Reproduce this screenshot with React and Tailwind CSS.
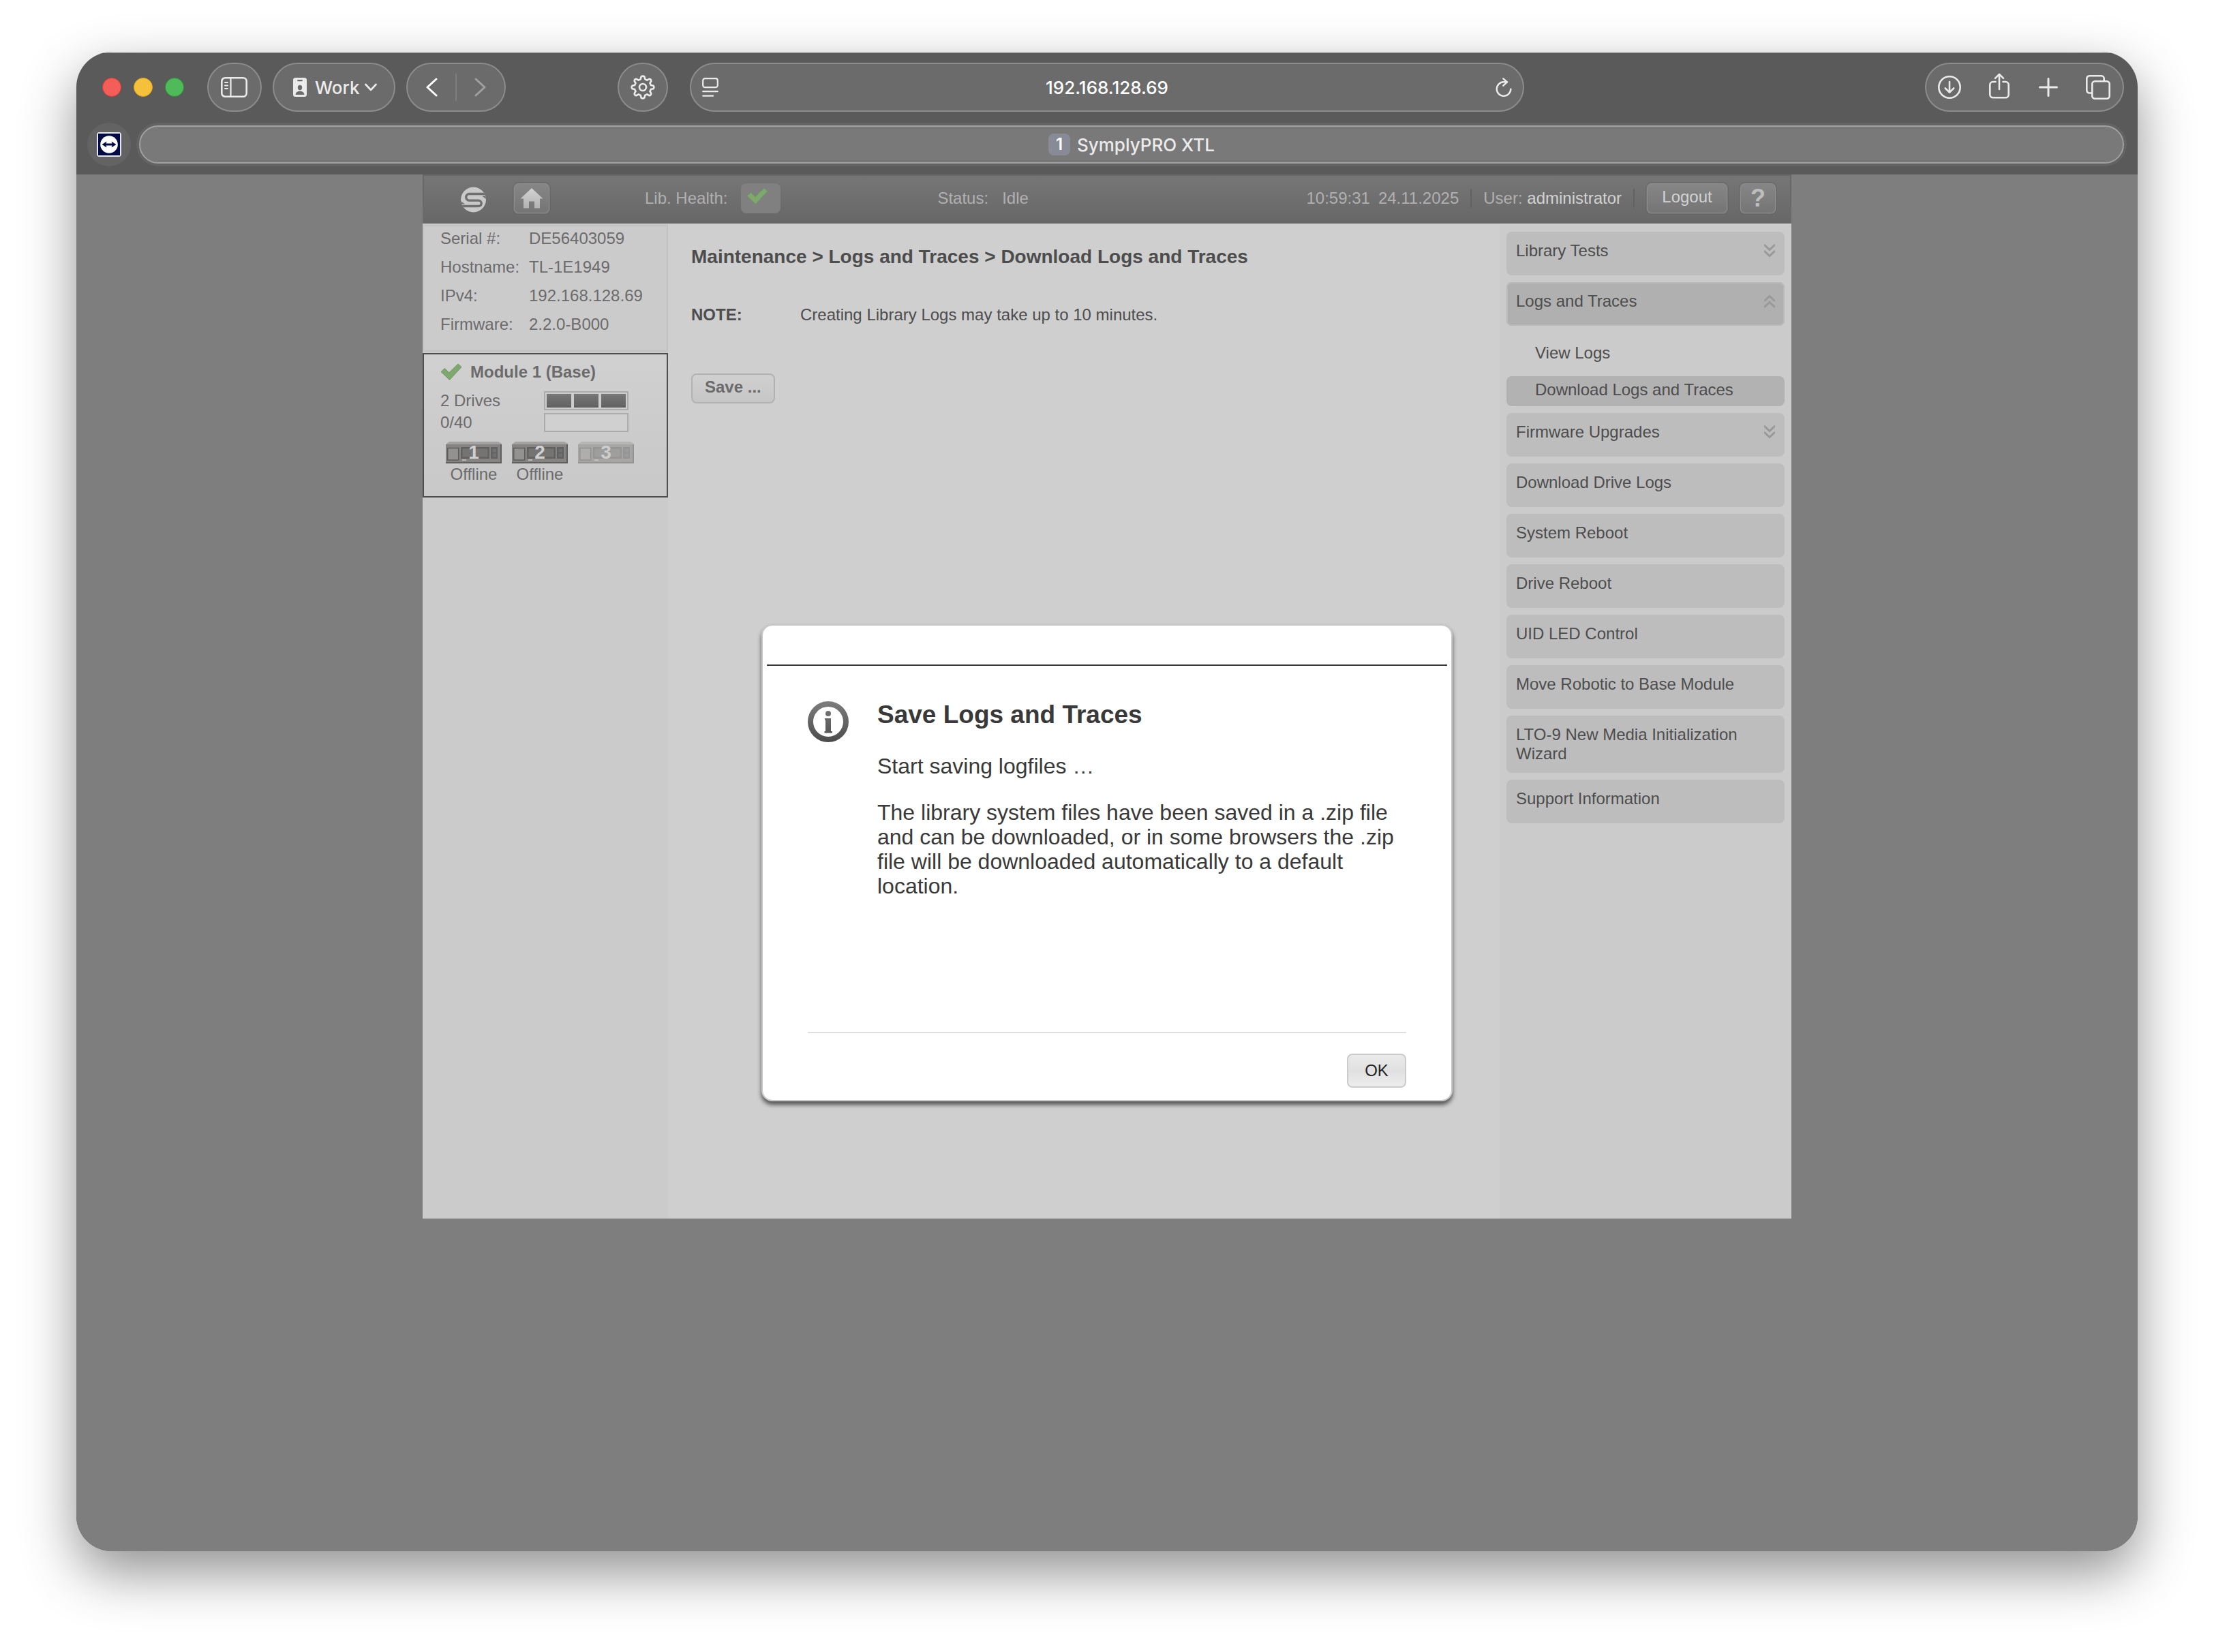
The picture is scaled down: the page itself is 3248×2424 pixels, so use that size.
import React, { useState } from 'react';

const libraryInfo = [
    { label: 'Serial #:', value: 'DE56403059' },
    { label: 'Hostname:', value: 'TL-1E1949' },
    { label: 'IPv4:', value: '192.168.128.69' },
    { label: 'Firmware:', value: '2.2.0-B000' },
];

const drives = [
    { id: 1, status: 'Offline' },
    { id: 2, status: 'Offline' },
    { id: 3, status: null },
];

const menu = [
    { label: 'Library Tests', expandable: true },
    {
        label: 'Logs and Traces',
        expandable: true,
        open: true,
        children: [
            { label: 'View Logs' },
            { label: 'Download Logs and Traces', active: true },
        ],
    },
    { label: 'Firmware Upgrades', expandable: true },
    { label: 'Download Drive Logs' },
    { label: 'System Reboot' },
    { label: 'Drive Reboot' },
    { label: 'UID LED Control' },
    { label: 'Move Robotic to Base Module' },
    { label: 'LTO-9 New Media Initialization Wizard' },
    { label: 'Support Information' },
];

/* ---------- browser icons ---------- */

function SidebarIcon() {
    return (
        <svg width="40" height="32" viewBox="0 0 40 32" fill="none" stroke="currentColor" strokeWidth="2.6" strokeLinecap="round">
            <rect x="1.3" y="2.3" width="36.4" height="27.4" rx="5" />
            <path d="M14.5 2.5v27" strokeWidth="2.2" />
            <path d="M6 9h4M6 13.500h4M6 18h4" strokeWidth="2" />
        </svg>
    );
}

function BadgeIcon() {
    return (
        <svg width="20" height="28" viewBox="0 0 20 28">
            <rect width="20" height="28" rx="3.500" fill="currentColor" />
            <rect x="6" y="3" width="8" height="2.200" rx="1.100" fill="#6b6b6b" />
            <ellipse cx="10" cy="14.500" rx="3.200" ry="3.700" fill="#6b6b6b" />
            <path d="M3.500 25c.4-3.600 3-5.300 6.500-5.300s6.100 1.700 6.500 5.300z" fill="#6b6b6b" />
        </svg>
    );
}

function Chevron({ d, width, height, stroke = 3 }) {
    return (
        <svg
            width={width}
            height={height}
            viewBox={`0 0 ${width} ${height}`}
            fill="none"
            stroke="currentColor"
            strokeWidth={stroke}
            strokeLinecap="round"
            strokeLinejoin="round"
        >
            <path d={d} />
        </svg>
    );
}

function GearIcon() {
    return (
        <svg width="36" height="36" viewBox="0 0 36 36" fill="none" stroke="currentColor" strokeWidth="2.6" strokeLinejoin="round">
            <path d="M15.600 2.500Q18 .7 20.400 2.500L21.300 6.200Q23 6.800 24.300 7.700L27.500 5.800Q30.400 6.200 30.300 9L28.500 12Q29.400 13.400 29.800 15L33.500 15.800Q35.200 18 33.500 20.200L29.800 21Q29.400 22.700 28.500 24L30.300 27.200Q30.200 30 27.300 30.200L24.300 28.300Q22.900 29.300 21.300 29.700L20.400 33.400Q18 35.200 15.600 33.400L14.700 29.700Q13.100 29.300 11.700 28.300L8.700 30.200Q5.800 30 5.700 27.200L7.500 24Q6.600 22.700 6.200 21L2.500 20.200Q.8 18 2.500 15.800L6.200 15Q6.600 13.400 7.500 12L5.700 9Q5.600 6.200 8.500 5.800L11.700 7.700Q13 6.800 14.700 6.200Z" />
            <circle cx="18" cy="18" r="5" />
        </svg>
    );
}

function ReaderIcon() {
    return (
        <svg width="24" height="28" viewBox="0 0 24 28" fill="none" stroke="currentColor" strokeWidth="2.200" strokeLinecap="round">
            <rect x="1.200" y="1.200" width="21.600" height="13" rx="3" />
            <path d="M1.200 20.200h21.600M1.200 26.600h15" />
        </svg>
    );
}

function ReloadIcon() {
    return (
        <svg width="24" height="28" viewBox="0 0 24 28" fill="none" stroke="currentColor" strokeWidth="2.400" strokeLinecap="round" strokeLinejoin="round">
            <path d="M22.300 16.600A10.300 10.300 0 1 1 12 6.300h5" />
            <path d="M11.300 1.300l5.700 5-5.700 5.400" />
        </svg>
    );
}

function DownloadIcon() {
    return (
        <svg width="36" height="36" viewBox="0 0 36 36" fill="none" stroke="currentColor" strokeWidth="2.600" strokeLinecap="round" strokeLinejoin="round">
            <circle cx="18" cy="18" r="15.700" />
            <path d="M18 10v15.500M11.800 19.500l6.200 6.200 6.200-6.200" />
        </svg>
    );
}

function ShareIcon() {
    return (
        <svg width="32" height="38" viewBox="0 0 32 38" fill="none" stroke="currentColor" strokeWidth="2.600" strokeLinecap="round" strokeLinejoin="round">
            <path d="M10.500 13H6.800a4.500 4.500 0 0 0-4.500 4.500v14.300a4.500 4.500 0 0 0 4.500 4.500h18.400a4.500 4.500 0 0 0 4.500-4.500V17.500a4.500 4.500 0 0 0-4.500-4.500h-3.700" />
            <path d="M16 24V2M10 7.800L16 1.800l6 6" />
        </svg>
    );
}

function PlusIcon() {
    return (
        <svg width="28" height="28" viewBox="0 0 28 28" stroke="currentColor" strokeWidth="3" strokeLinecap="round">
            <path d="M14 1.500v25M1.500 14h25" />
        </svg>
    );
}

function TabsIcon() {
    return (
        <svg width="36" height="36" viewBox="0 0 36 36" fill="none" stroke="currentColor" strokeWidth="2.600" strokeLinejoin="round">
            <rect x="9.300" y="9.300" width="25.400" height="25.400" rx="4" />
            <path d="M9 26.500H5.300a4 4 0 0 1-4-4V5.300a4 4 0 0 1 4-4h17.400a4 4 0 0 1 4 4v3.700" />
        </svg>
    );
}

function RemoteIcon() {
    return (
        <svg width="36" height="36" viewBox="0 0 36 36">
            <rect width="36" height="36" rx="4" fill="#e6e6ea" />
            <rect x="2" y="2" width="32" height="32" fill="#020b45" />
            <circle cx="18" cy="18" r="12.800" fill="#fff" />
            <path d="M7.500 18l7-4.500-.8 3.100h8.600l-.8-3.100 7 4.500-7 4.500.8-3.100h-8.600l.8 3.100z" fill="#020b45" />
        </svg>
    );
}

/* ---------- library icons ---------- */

function SymplyLogo() {
    return (
        <svg width="37" height="38" viewBox="0 0 37 38">
            <defs>
                <clipPath id="disc">
                    <circle cx="18.500" cy="19" r="18.500" />
                </clipPath>
            </defs>
            <g clipPath="url(#disc)" fill="none">
                <rect width="37" height="38" fill="#c9c9c9" />
                <path d="M38 10.500H12.500a4.800 4.800 0 0 0 0 9.600H26a4 4 0 0 1 0 8.400H-1" stroke="#6f6f6f" strokeWidth="3.400" />
                <path d="M31 13.500h8v6z" fill="#6f6f6f" />
                <path d="M6 25.500h-8v-6z" fill="#6f6f6f" />
            </g>
        </svg>
    );
}

function HomeIcon() {
    return (
        <svg width="34" height="30" viewBox="0 0 34 30">
            <defs>
                <linearGradient id="home" x1="0" y1="0" x2="0" y2="1">
                    <stop offset="0" stopColor="#d2d2d2" />
                    <stop offset="1" stopColor="#b2b2b2" />
                </linearGradient>
            </defs>
            <path d="M17 0L33.500 15.500H29V29.500H21V19.500H13V29.500H5V15.500H.5z" fill="url(#home)" />
        </svg>
    );
}

function CheckIcon() {
    return (
        <svg width="32" height="26" viewBox="0 0 32 26">
            <path d="M1 12.500L6.500 7.500L12.800 13.800L26 1L31 5.500L13.500 24.500z" fill="#7fa86c" stroke="#6f9468" strokeWidth="1" strokeLinejoin="round" />
        </svg>
    );
}

function DoubleChevron({ up }) {
    return (
        <svg width="16" height="20" viewBox="0 0 16 20" fill="none" stroke="#999" strokeWidth="3">
            {up ? <path d="M0 10l8-7.500 8 7.500M0 19l8-7.500 8 7.500" /> : <path d="M0 1l8 7.500 8-7.500M0 10l8 7.500 8-7.500" />}
        </svg>
    );
}

function DriveIcon({ number, empty }) {
    return (
        <div className={`relative w-[82px] h-8 ${empty ? 'opacity-50' : ''}`}>
            <svg width="82" height="33" viewBox="0 0 82 33">
                <path d="M0 4L5 0H77L82 3V32H0z" fill="#a3a3a3" />
                <path d="M0 4H82V31H0z" fill="#858482" />
                <path d="M80 4h2v28H0v-2h80z" fill="#5e5e5e" />
                <rect x="2.700" y="9.500" width="16" height="17.500" fill="#939290" stroke="#5c5c5c" strokeWidth="1.500" />
                <rect x="22" y="8" width="42" height="17" fill="#616161" />
                <rect x="24.500" y="10.500" width="37" height="12" fill="#757472" />
                <rect x="66" y="8" width="10" height="17" fill="#616161" />
                <path d="M68.500 10.500h5.500v5h-5.500zM68.500 17.500h5.500v5h-5.500z" fill="#707070" />
                <rect x="24" y="26" width="6" height="2" fill="#b8b8b8" />
            </svg>
            <span className="absolute inset-0 text-center text-[28px] leading-8 font-bold text-[#d0d0d0]">{number}</span>
        </div>
    );
}

function InfoIcon() {
    return (
        <svg width="60" height="60" viewBox="0 0 60 60">
            <defs>
                <linearGradient id="info" x1="0" y1="0" x2="0" y2="60" gradientUnits="userSpaceOnUse">
                    <stop offset="0" stopColor="#7d7d7d" />
                    <stop offset="1" stopColor="#4c4c4c" />
                </linearGradient>
            </defs>
            <circle cx="30" cy="30" r="26" fill="none" stroke="url(#info)" strokeWidth="8" />
            <circle cx="30" cy="18" r="4" fill="url(#info)" />
            <path d="M25 25h9v19h2v2.500H24.500V44H26V27.500h-1z" fill="url(#info)" />
        </svg>
    );
}

/* ---------- browser chrome ---------- */

function BrowserToolbar() {
    return (
        <div className="flex items-center py-4 px-5 gap-8">
            <div className="flex flex-1 items-center justify-between">
                <div className="flex items-center gap-4">
                    <div className="flex gap-[18px] px-[18px]">
                        <button aria-label="Close" className="size-7 rounded-full bg-[#f35f58] border border-[#dd3f3a]" />
                        <button aria-label="Minimize" className="size-7 rounded-full bg-[#f5c03a] border border-[#dfa21e]" />
                        <button aria-label="Zoom" className="size-7 rounded-full bg-[#50b95a] border border-[#2f9a39]" />
                    </div>
                    <button aria-label="Show sidebar" className="flex items-center justify-center w-20 h-[72px] rounded-full bg-[#6b6b6b] border-2 border-[#8c8c8c]">
                        <SidebarIcon />
                    </button>
                    <button className="flex items-center h-[72px] w-[180px] pl-7 rounded-full bg-[#6b6b6b] border-2 border-[#8c8c8c] text-[26px] font-medium">
                        <BadgeIcon />
                        <span className="pl-3 pr-2">Work</span>
                        <Chevron width={18} height={12} d="M1.500 2l7.500 8 7.500-8" stroke={2.6} />
                    </button>
                    <div className="flex items-center h-[72px] w-[146px] rounded-full bg-[#6b6b6b] border-2 border-[#8c8c8c]">
                        <button aria-label="Back" className="flex flex-1 justify-center text-white">
                            <Chevron width={18} height={28} d="M16 2L3 14l13 12" />
                        </button>
                        <div className="w-0.5 h-10 bg-[#7d7d7d]" />
                        <button aria-label="Forward" className="flex flex-1 justify-center text-[#a0a0a0]">
                            <Chevron width={18} height={28} d="M2 2l13 12L2 26" />
                        </button>
                    </div>
                </div>
                <button aria-label="Extension settings" className="flex items-center justify-center w-[74px] h-[72px] rounded-full bg-[#6b6b6b] border-2 border-[#8c8c8c]">
                    <GearIcon />
                </button>
            </div>

            <div className="flex items-center w-[1224px] h-[72px] px-4 rounded-full bg-[#6b6b6b] border-2 border-[#8c8c8c]">
                <button aria-label="Page menu">
                    <ReaderIcon />
                </button>
                <input
                    aria-label="Address"
                    defaultValue="192.168.128.69"
                    className="flex-1 min-w-0 bg-transparent text-center text-[26px] font-medium text-white outline-none"
                />
                <button aria-label="Reload">
                    <ReloadIcon />
                </button>
            </div>

            <div className="flex flex-1 justify-end">
                <div className="flex items-center justify-between w-[292px] h-[72px] pl-4 pr-[18px] rounded-full bg-[#6b6b6b] border-2 border-[#8c8c8c]">
                    <button aria-label="Downloads"><DownloadIcon /></button>
                    <button aria-label="Share" className="flex justify-center w-9 pb-1"><ShareIcon /></button>
                    <button aria-label="New tab" className="flex justify-center w-9"><PlusIcon /></button>
                    <button aria-label="Tab overview"><TabsIcon /></button>
                </div>
            </div>
        </div>
    );
}

function TabBar() {
    return (
        <div className="flex gap-2 px-4 pb-3">
            <button aria-label="Pinned tab" className="flex items-center justify-center size-16 rounded-full bg-[#636363]">
                <RemoteIcon />
            </button>
            <div className="flex-1 p-1 rounded-full bg-[#636363]">
                <button className="flex items-center justify-center gap-2.5 w-full h-14 rounded-full bg-[#797979] border-2 border-[#a0a0a0] text-[26px] font-medium">
                    <span className="size-8 rounded-lg bg-[#888a96] text-2xl text-white font-semibold">1</span>
                    SymplyPRO XTL
                </button>
            </div>
        </div>
    );
}

/* ---------- library web interface ---------- */

function Header() {
    return (
        <header className="flex items-center h-[72px] pl-[54px] pr-5 border-2 border-b-0 border-[#686868] bg-linear-to-b from-[#767676] to-[#676767] text-[#b0b0b0]">
            <SymplyLogo />
            <button aria-label="Home" className="flex items-center justify-center ml-10 mb-1 w-[54px] h-[46px] rounded-lg border-2 border-[#8e8e8e] bg-linear-to-b from-[#868686] to-[#757575] outline-2 -outline-offset-1 outline-[#626262]/60">
                <HomeIcon />
            </button>
            <div className="flex items-center gap-5 pb-1 ml-[139px]">
                <span>Lib. Health:</span>
                <div className="w-[58px] h-11 pl-2 pt-1.5 rounded-lg bg-[#808080]">
                    <CheckIcon />
                </div>
            </div>
            <div className="flex gap-5 ml-[230px] pb-1">
                <span>Status:</span>
                <span>Idle</span>
            </div>
            <div className="flex items-center gap-[17px] pb-1 ml-auto">
                <div className="flex gap-3">
                    <span>10:59:31</span>
                    <span>24.11.2025</span>
                </div>
                <div className="w-0.5 h-7 bg-[#626262]" />
                <div>
                    User: <span className="text-[#d2d2d2]">administrator</span>
                </div>
                <div className="w-0.5 h-7 bg-[#626262]" />
                <button className="w-[120px] h-[46px] pb-1 rounded-lg border-2 border-[#8e8e8e] bg-linear-to-b from-[#868686] to-[#757575] text-[#d2d2d2] outline-2 -outline-offset-1 outline-[#626262]/60">
                    Logout
                </button>
                <button aria-label="Help" className="w-[54px] h-[46px] rounded-lg border-2 border-[#8e8e8e] bg-linear-to-b from-[#868686] to-[#757575] text-4xl font-bold leading-10 text-[#bdbdbd] outline-2 -outline-offset-1 outline-[#626262]/60">
                    ?
                </button>
            </div>
        </header>
    );
}

function StatusSidebar() {
    return (
        <aside className="w-[360px] shrink-0 pt-0.5 bg-[#cbcbcb] text-[#6b6b6b]">
            <dl className="flex flex-col gap-2 h-[186px] pl-6 pt-px border-2 border-[#c2c2c2]">
                {libraryInfo.map((item) => (
                    <div key={item.label} className="flex leading-[34px]">
                        <dt className="w-[130px]">{item.label}</dt>
                        <dd>{item.value}</dd>
                    </div>
                ))}
            </dl>

            <section className="mt-0.5 h-[212px] pl-6 pt-2.5 border-2 border-[#4e4e4e] bg-linear-to-b from-[#d0d0d0] to-[#c8c8c8]">
                <div className="flex items-center gap-3">
                    <CheckIcon />
                    <h2 className="font-bold leading-8">Module 1 (Base)</h2>
                </div>
                <div className="flex pt-2.5">
                    <div className="w-[152px] leading-8">
                        <p>2 Drives</p>
                        <p>0/40</p>
                    </div>
                    <div className="flex flex-col gap-1 pt-0.5">
                        <div className="flex gap-1 w-[124px] h-7 p-0.5 border-2 border-[#ababab]">
                            <div className="flex-1 bg-linear-to-b from-[#777] to-[#616161]" />
                            <div className="flex-1 bg-linear-to-b from-[#777] to-[#616161]" />
                            <div className="flex-1 bg-linear-to-b from-[#777] to-[#616161]" />
                        </div>
                        <div className="w-[124px] h-7 border-2 border-[#ababab] bg-[#d0d0d0]" />
                    </div>
                </div>
                <div className="flex gap-[15px] pl-2 pt-3">
                    {drives.map((drive) => (
                        <div key={drive.id} className="text-center leading-8">
                            <DriveIcon number={drive.id} empty={!drive.status} />
                            {drive.status}
                        </div>
                    ))}
                </div>
            </section>
        </aside>
    );
}

function SideMenu() {
    return (
        <nav className="w-[428px] shrink-0 mt-0.5 px-2.5 pt-2.5 bg-[#cbcbcb] text-[#4d4d4d] leading-7">
            <ul className="flex flex-col gap-2.5">
                {menu.map((item) => (
                    <li key={item.label}>
                        <a
                            href="#"
                            className={`flex items-start justify-between min-h-16 px-3.5 py-3.5 rounded-lg ${
                                item.open ? 'bg-[#b0b0b0] inset-ring-2 inset-ring-[#b9b9b9]' : 'bg-[#bdbdbd]'
                            }`}
                        >
                            <span>{item.label}</span>
                            {item.expandable && (
                                <span className="pt-1">
                                    <DoubleChevron up={item.open} />
                                </span>
                            )}
                        </a>
                        {item.children && (
                            <ul className="flex flex-col gap-2.5 pt-5">
                                {item.children.map((child) => (
                                    <li key={child.label}>
                                        <a href="#" className={`block h-11 pl-[42px] pt-1.5 rounded-lg ${child.active ? 'bg-[#b2b2b2]' : ''}`}>
                                            {child.label}
                                        </a>
                                    </li>
                                ))}
                            </ul>
                        )}
                    </li>
                ))}
            </ul>
        </nav>
    );
}

function SaveDialog({ onClose }) {
    return (
        <div className="absolute inset-0 flex items-center justify-center">
            <div
                role="dialog"
                aria-labelledby="save-title"
                className="flex flex-col w-[1014px] min-h-[700px] px-1.5 rounded-2xl border-2 border-[#c8c8c8] bg-white bg-clip-padding shadow-[0_5px_6px_rgba(0,0,0,0.6)] text-[#393939]"
            >
                <div className="h-[59px] border-b-2 border-[#3b393a]" />
                <div className="flex flex-1 flex-col px-[60px] pt-[52px] pb-[18px]">
                    <div className="flex flex-1 gap-[42px]">
                        <div>
                            <InfoIcon />
                        </div>
                        <div className="text-[32px] leading-9">
                            <h1 id="save-title" className="text-[37px] leading-10 font-bold">Save Logs and Traces</h1>
                            <p className="pt-[37px]">Start saving logfiles …</p>
                            <p className="pt-8">
                                The library system files have been saved in a .zip file and can be downloaded, or in some browsers the .zip
                                file will be downloaded automatically to a default location.
                            </p>
                        </div>
                    </div>
                    <div className="flex justify-end pt-[30px] border-t-2 border-[#dedede]">
                        <button
                            onClick={onClose}
                            className="w-[87px] h-[50px] rounded-lg border-2 border-[#cbcbcb] bg-linear-to-b from-[#ebebeb] via-[#e0e0e0] to-[#ededed] text-[#222]"
                        >
                            OK
                        </button>
                    </div>
                </div>
            </div>
        </div>
    );
}

export default function App() {
    const [showDialog, setShowDialog] = useState(true);

    return (
        <div className="flex min-h-screen px-28 pt-[76px] pb-[148px] bg-white">
            <div className="flex flex-1 flex-col overflow-hidden rounded-[52px] bg-[#5a5a5a] shadow-[0_32px_80px_rgba(0,0,0,0.43)] font-['Inter',sans-serif] text-[#ebebeb]">
                <div className="border-t-2 border-[#b2b4b2] -mb-0.5" />
                <BrowserToolbar />
                <TabBar />

                <div className="relative flex-1 bg-[#7e7e7e] font-['Liberation_Sans',Arial,sans-serif] text-2xl">
                    <div className="w-[2008px] mx-auto">
                        <Header />
                        <div className="flex min-h-[1460px] bg-[#cfcfcf]">
                            <StatusSidebar />
                            <main className="flex-1 px-[34px] pt-[33px] text-[#4d4d4d]">
                                <h1 className="text-[28px] leading-8 font-bold">Maintenance &gt; Logs and Traces &gt; Download Logs and Traces</h1>
                                <div className="flex pt-[53px] leading-8">
                                    <strong className="w-40">NOTE:</strong>
                                    <p>Creating Library Logs may take up to 10 minutes.</p>
                                </div>
                                <button
                                    onClick={() => setShowDialog(true)}
                                    className="mt-[70px] h-11 px-[18px] pb-1 rounded-lg border-2 border-[#b2b2b2] bg-linear-to-b from-[#d0d0d0] to-[#c6c6c6] font-bold text-[#6b6b6b]"
                                >
                                    Save ...
                                </button>
                            </main>
                            <SideMenu />
                        </div>
                    </div>
                    {showDialog && <SaveDialog onClose={() => setShowDialog(false)} />}
                </div>
            </div>
        </div>
    );
}
